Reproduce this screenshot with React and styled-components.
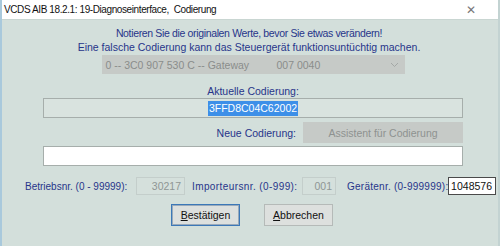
import React from 'react'
import styled, { createGlobalStyle } from 'styled-components'

const Global = createGlobalStyle`
    html, body {
        margin: 0;
        padding: 0;
        width: 500px;
        height: 246px;
        overflow: hidden;
        background: #d3dfdb;
    }
    * {
        box-sizing: border-box;
    }
`

const Window = styled.div`
    width: 500px;
    height: 246px;
    display: flex;
    flex-direction: column;
    background: #d3dfdb;
    border-left: 2px solid #a9c9dc;
    border-right: 2px solid #c3d3d2;
    font-family: "Liberation Sans", Arial, sans-serif;
`

const TitleBar = styled.div`
    height: 20px;
    flex: none;
    display: flex;
    align-items: center;
    justify-content: space-between;
    background: #ffffff;
    padding: 0 22px 0 2px;
    font-size: 10px;
    letter-spacing: -0.4px;
    color: #111;
    border-bottom: 1px solid #c9d6d2;
`

const Close = styled.span`
    font-size: 12px;
    color: #777;
`

const Body = styled.div`
    display: flex;
    flex-direction: column;
    align-items: center;
    padding-top: 6px;
    padding-left: 6px;
`

const Note = styled.div`
    color: #27358a;
    font-size: 10.5px;
    line-height: 14px;
    text-align: center;
    margin-left: -8px;
    letter-spacing: ${p => p.$tight ? '-0.35px' : '0'};
`

const Select = styled.div`
    margin-top: 1px;
    width: 303px;
    height: 19px;
    background: #c6cac7;
    display: flex;
    align-items: center;
    padding: 0 4px;
    color: #8a8d8b;
    font-size: 10.5px;
`

const SelectPart = styled.span`
    width: ${p => p.$w}px;
    flex: none;
`

const Chevron = styled.svg`
    margin-left: auto;
    margin-right: 2px;
`

const Label = styled.div`
    color: #27358a;
    font-size: 10.5px;
    line-height: 14px;
    margin-top: ${p => p.$top || 0}px;
`

const Field = styled.div`
    width: 420px;
    height: 20px;
    margin-top: ${p => p.$top || 0}px;
    background: ${p => p.$white ? '#ffffff' : '#d9e3df'};
    border: 1px solid #a6aeab;
    display: flex;
    align-items: center;
    justify-content: center;
    font-size: 10.5px;
`

const Selected = styled.span`
    background: #3d8fe8;
    color: #ffffff;
    line-height: 15px;
    padding: 0 1px;
`

const NewRow = styled.div`
    width: 420px;
    display: flex;
    align-items: center;
    justify-content: flex-end;
    gap: 7px;
    margin-top: 4px;
`

const Wizard = styled.div`
    width: 160px;
    height: 21px;
    background: #c6cac7;
    color: #8e9290;
    font-size: 10.5px;
    display: flex;
    align-items: center;
    justify-content: center;
`

const NumRow = styled.div`
    align-self: flex-start;
    display: flex;
    align-items: center;
    margin-top: 11px;
    margin-left: 17px;
    font-size: 10px;
    color: #27358a;
`

const NumLabel = styled.span`
    width: ${p => p.$w}px;
    margin-left: ${p => p.$gap || 0}px;
    letter-spacing: ${p => p.$spacing || 0}px;
    white-space: nowrap;
`

const NumBox = styled.div`
    width: ${p => p.$w}px;
    height: 18px;
    margin-left: ${p => p.$gap}px;
    background: ${p => p.$active ? '#ffffff' : '#d5e0dc'};
    border: 1px solid ${p => p.$active ? '#4a4a4a' : '#c4cecb'};
    color: ${p => p.$active ? '#111' : '#8f9694'};
    display: flex;
    align-items: center;
    justify-content: flex-end;
    padding-right: 3px;
    font-size: 10.5px;
`

const Buttons = styled.div`
    display: flex;
    gap: 24px;
    margin-top: 9px;
    margin-left: -2px;
`

const Button = styled.div`
    width: 69px;
    height: 22px;
    background: #dde0de;
    border: 1px solid ${p => p.$focus ? '#3c78b8' : '#b5bab8'};
    box-shadow: ${p => p.$focus ? 'inset 0 0 0 1px #9ab' : 'none'};
    color: #111;
    font-size: 10.5px;
    display: flex;
    align-items: center;
    justify-content: center;
    u {
        text-decoration: underline;
    }
`

export default function App() {
    return (
        <>
            <Global />
            <Window>
                <TitleBar>
                    <span>VCDS AIB 18.2.1: 19-Diagnoseinterface,&nbsp; Codierung</span>
                    <Close>✕</Close>
                </TitleBar>
                <Body>
                    <Note $tight>Notieren Sie die originalen Werte, bevor Sie etwas verändern!</Note>
                    <Note>Eine falsche Codierung kann das Steuergerät funktionsuntüchtig machen.</Note>
                    <Select>
                        <SelectPart $w={171}>0 -- 3C0 907 530 C -- Gateway</SelectPart>
                        <SelectPart $w={60}>007 0040</SelectPart>
                        <Chevron width="9" height="6" viewBox="0 0 9 6">
                            <path d="M1 1 L4.5 4.5 L8 1" fill="none" stroke="#a4a8a6" strokeWidth="1" />
                        </Chevron>
                    </Select>
                    <Label $top={10}>Aktuelle Codierung:</Label>
                    <Field><Selected>3FFD8C04C62002</Selected></Field>
                    <NewRow>
                        <Label>Neue Codierung:</Label>
                        <Wizard>Assistent für Codierung</Wizard>
                    </NewRow>
                    <Field $white $top={3} />
                    <NumRow>
                        <NumLabel $w={106}>Betriebsnr. (0 - 99999):</NumLabel>
                        <NumBox $w={49} $gap={5}>30217</NumBox>
                        <NumLabel $w={105} $gap={7} $spacing={0.4}>Importeursnr. (0-999):</NumLabel>
                        <NumBox $w={34} $gap={5}>001</NumBox>
                        <NumLabel $w={100} $gap={11} $spacing={0.25}>Gerätenr. (0-999999):</NumLabel>
                        <NumBox $w={48} $gap={1} $active>1048576</NumBox>
                    </NumRow>
                    <Buttons>
                        <Button $focus><span><u>B</u>estätigen</span></Button>
                        <Button><span><u>A</u>bbrechen</span></Button>
                    </Buttons>
                </Body>
            </Window>
        </>
    )
}
